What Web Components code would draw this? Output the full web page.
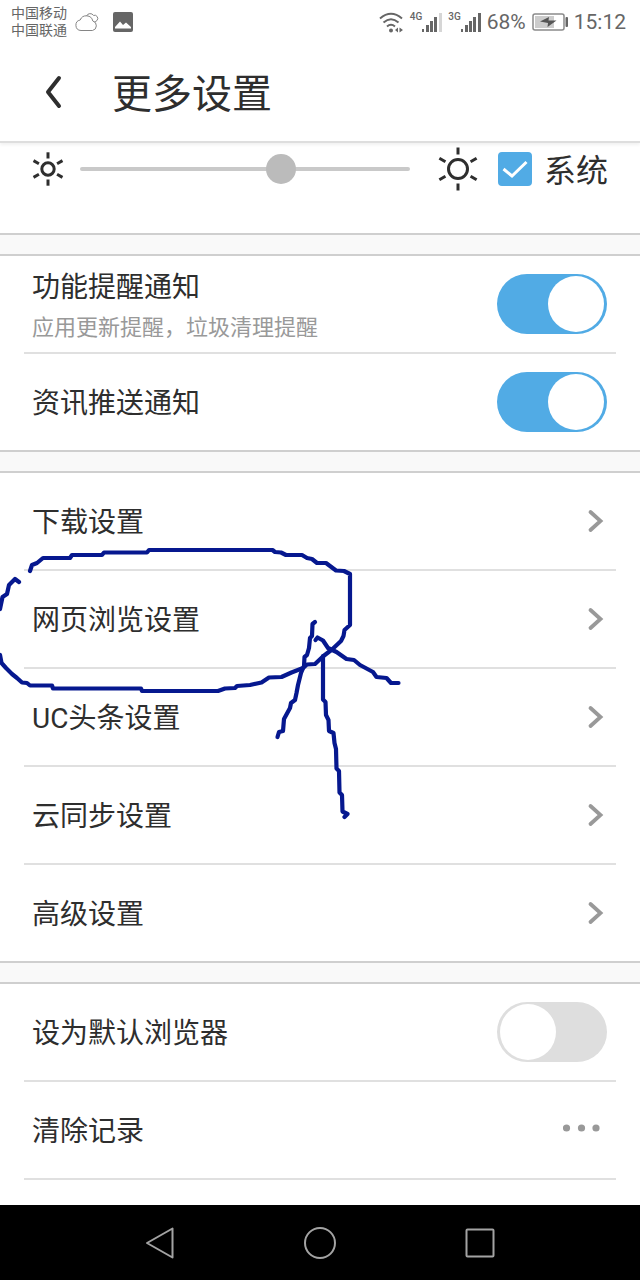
<!DOCTYPE html>
<html lang="zh-CN">
<head>
<meta charset="UTF-8">
<meta name="viewport" content="width=device-width, initial-scale=1">
<title>更多设置</title>
<style>
    html, body {
        margin: 0;
        height: 100%;
    }
    body {
        font-family: Roboto, "Noto Sans CJK SC", sans-serif;
        color: #2e2e2e;
        background: #fff;
    }
</style>
</head>
<body>
<settings-app>
    <status-bar slot="top"></status-bar>
    <page-header slot="top">更多设置</page-header>

    <brightness-panel>系统</brightness-panel>

    <settings-group>
        <switch-row checked>功能提醒通知<span slot="hint">应用更新提醒，垃圾清理提醒</span></switch-row>
        <switch-row checked>资讯推送通知</switch-row>
    </settings-group>

    <settings-group>
        <link-row href="#download">下载设置</link-row>
        <link-row href="#browsing">网页浏览设置</link-row>
        <link-row href="#headlines">UC头条设置</link-row>
        <link-row href="#sync">云同步设置</link-row>
        <link-row href="#advanced">高级设置</link-row>
        <pen-marks slot="overlay"></pen-marks>
    </settings-group>

    <settings-group open-ended>
        <switch-row>设为默认浏览器</switch-row>
        <action-row>清除记录</action-row>
    </settings-group>

    <nav-bar slot="bottom"></nav-bar>
</settings-app>

<script>
customElements.define('settings-app', class SettingsApp extends HTMLElement {
    constructor() {
        super();
        this.attachShadow({ mode: 'open' });
        this.shadowRoot.innerHTML = `
        <style>
            :host {
                display: flex;
                flex-direction: column;
                height: 100vh;
            }
            main {
                flex: 1;
                min-height: 0;
                overflow: hidden;
                display: flex;
                flex-direction: column;
                gap: 19px;
                background: #f9f9f9;
            }
        </style>
        <slot name="top"></slot>
        <main><slot></slot></main>
        <slot name="bottom"></slot>
        `;
    }
});

customElements.define('status-bar', class StatusBar extends HTMLElement {
    constructor() {
        super();
        this.attachShadow({ mode: 'open' });
        this.shadowRoot.innerHTML = `
        <style>
            :host {
                display: flex;
                justify-content: space-between;
                align-items: center;
                flex: none;
                height: 44px;
                padding: 0 14px 0 11px;
                box-sizing: border-box;
                color: #666;
            }
            .side, .signal {
                display: flex;
                align-items: center;
            }
            .side {
                gap: 6px;
            }
            .side.start {
                gap: 8px;
            }
            .carriers {
                font-size: 14px;
                line-height: 17px;
            }
            .picture {
                margin-left: 6px;
            }
            .signal {
                align-items: flex-start;
                font-size: 10px;
                line-height: 10px;
                font-weight: 500;
            }
            .value {
                font-size: 21px;
                line-height: 24px;
            }
            svg {
                display: block;
                flex: none;
            }
        </style>
        <div class="side start">
            <div class="carriers">
                <div>中国移动</div>
                <div>中国联通</div>
            </div>
            <svg width="24" height="20" viewBox="0 0 24 20" fill="none" stroke="#858585" stroke-width="1">
                <path d="M6 18.500a5.300 5.300 0 0 1-.8-10.500 6.600 6.600 0 0 1 12.600 1 4.900 4.900 0 0 1-.3 9.500z"/>
                <path d="M11.500 4a4 4 0 0 1 7-.6 3.200 3.200 0 0 1 3.400 5.200 3.500 3.500 0 0 1-2.400 1.200"/>
            </svg>
            <svg class="picture" width="20" height="20" viewBox="0 0 20 20">
                <rect width="20" height="20" rx="2" fill="#666"/>
                <path d="M2 16.500V15l5-5.500 3 3.500 3-2.500 5 4.500v1.500z" fill="#fff"/>
            </svg>
        </div>
        <div class="side">
            <svg width="25" height="21" viewBox="0 0 25 21" fill="none" stroke="#666" stroke-width="2">
                <path d="M1 6.500q11-9.500 22 0M4.500 10.500q7.500-6.500 15 0M8 14.500q4-3.500 8 0"/>
                <circle cx="12" cy="18.500" r="2" fill="#666" stroke="none"/>
                <path d="M19 15.500v5l-3-2.500zM20.500 15.500v5l3.500-2.500z" fill="#666" stroke="none"/>
            </svg>
            <div class="signal">
                <span>4G</span>
                <svg width="20" height="20" viewBox="0 0 20 20" fill="#666">
                    <rect y="17" width="2" height="3"/><rect x="4" y="13" width="3" height="7"/>
                    <rect x="8" y="9" width="3" height="11"/><rect x="12" y="5" width="3" height="15"/>
                    <rect x="17" y="1" width="3" height="19" fill="#d6d6d6"/>
                </svg>
            </div>
            <div class="signal">
                <span>3G</span>
                <svg width="20" height="20" viewBox="0 0 20 20" fill="#666">
                    <rect y="17" width="2" height="3"/><rect x="4" y="13" width="3" height="7"/>
                    <rect x="8" y="9" width="3" height="11"/><rect x="12" y="5" width="3" height="15"/>
                    <rect x="17" y="1" width="3" height="19"/>
                </svg>
            </div>
            <span class="value">68%</span>
            <svg width="36" height="18" viewBox="0 0 36 18">
                <rect x="1" y="1" width="31" height="16" rx="2" fill="#fff" stroke="#8a8a8a" stroke-width="1.500"/>
                <rect x="3" y="3" width="19" height="12" fill="#ccc"/>
                <path d="M8 8.500l9-4.500-.5 3.500h8L15.500 14l.5-4z" fill="#555"/>
                <rect x="33.500" y="4" width="2.500" height="10" rx="1" fill="#666"/>
            </svg>
            <span class="value">15:12</span>
        </div>
        `;
    }
});

customElements.define('page-header', class PageHeader extends HTMLElement {
    constructor() {
        super();
        this.attachShadow({ mode: 'open' });
        this.shadowRoot.innerHTML = `
        <style>
            :host {
                display: block;
                flex: none;
                border-bottom: 2px solid #dedede;
                box-shadow: 0 2px 3px rgba(0, 0, 0, 0.06);
                z-index: 1;
            }
            header {
                display: flex;
                align-items: center;
                gap: 24px;
                height: 97px;
                padding: 0 32px 0 20px;
            }
            button {
                display: flex;
                justify-content: center;
                align-items: center;
                width: 68px;
                height: 68px;
                padding: 0;
                border: 0;
                background: none;
                color: inherit;
            }
            h1 {
                margin: 0;
                padding-top: 4px;
                font-size: 40px;
                line-height: 56px;
                font-weight: 400;
            }
        </style>
        <header>
            <button aria-label="返回">
                <svg width="20" height="36" viewBox="0 0 20 36" fill="none" stroke="currentColor" stroke-width="4" stroke-linecap="round" stroke-linejoin="round">
                    <path d="M15 3L4 17l11 14"/>
                </svg>
            </button>
            <h1><slot></slot></h1>
        </header>
        `;
    }
});

customElements.define('sun-icon', class SunIcon extends HTMLElement {
    constructor() {
        super();
        this.attachShadow({ mode: 'open' });
        const large = this.hasAttribute('large');
        const size = large ? 42 : 34;
        const radius = large ? 9.5 : 6.2;
        const inner = large ? 14.5 : 10.5;
        const outer = large ? 21.5 : 16.7;
        const rays = [0, 60, 120, 180, 240, 300].map(angle =>
            `<path d="M0-${inner}V-${outer}" transform="rotate(${angle})"/>`
        ).join('');
        this.shadowRoot.innerHTML = `
        <style>
            :host {
                display: block;
                flex: none;
            }
            svg {
                display: block;
                overflow: visible;
            }
        </style>
        <svg width="${size - 2}" height="${size}" viewBox="${1 - size / 2} ${-size / 2} ${size - 2} ${size}" fill="none" stroke="currentColor" stroke-width="3">
            <circle r="${radius}"/>
            ${rays}
        </svg>
        `;
    }
});

customElements.define('brightness-panel', class BrightnessPanel extends HTMLElement {
    constructor() {
        super();
        this.attachShadow({ mode: 'open' });
        this.shadowRoot.innerHTML = `
        <style>
            :host {
                display: flex;
                align-items: center;
                flex: none;
                height: 52px;
                padding: 0 32px 38px;
                background: #fff;
                border-bottom: 2px solid #cfcfcf;
            }
            .range {
                appearance: none;
                flex: 1;
                min-width: 0;
                height: 30px;
                margin: 0 28px 0 16px;
                background: none;
            }
            .range::-webkit-slider-runnable-track {
                height: 4px;
                border-radius: 2px;
                background: #c9c9c9;
            }
            .range::-webkit-slider-thumb {
                appearance: none;
                width: 30px;
                height: 30px;
                margin-top: -13px;
                border-radius: 50%;
                background: #bbb;
            }
            label {
                display: flex;
                align-items: center;
                gap: 12px;
                margin-left: 20px;
                font-size: 32px;
                line-height: 48px;
            }
            .text {
                padding-top: 3px;
            }
            .box {
                display: grid;
                width: 34px;
                height: 34px;
            }
            .box > * {
                grid-area: 1 / 1;
            }
            .box input {
                appearance: none;
                width: 34px;
                height: 34px;
                margin: 0;
                border: 2px solid #c9c9c9;
                border-radius: 4px;
            }
            .box input:checked {
                border-color: #51abe5;
                background: #51abe5;
            }
            .box svg {
                pointer-events: none;
            }
        </style>
        <sun-icon></sun-icon>
        <input class="range" type="range" min="0" max="100" value="62" aria-label="亮度">
        <sun-icon large></sun-icon>
        <label>
            <span class="box">
                <input type="checkbox" checked>
                <svg width="34" height="34" viewBox="0 0 34 34" fill="none" stroke="#fff" stroke-width="3">
                    <path d="M5.500 17l8.500 7L28.500 10"/>
                </svg>
            </span>
            <span class="text"><slot></slot></span>
        </label>
        `;
    }
});

customElements.define('settings-group', class SettingsGroup extends HTMLElement {
    constructor() {
        super();
        this.attachShadow({ mode: 'open' });
        this.shadowRoot.innerHTML = `
        <style>
            :host {
                display: block;
                flex: none;
                position: relative;
                padding: 0 24px;
                background: #fff;
                border: solid #cfcfcf;
                border-width: 2px 0;
            }
            :host([open-ended]) {
                flex: 1;
                border-bottom: 0;
            }
            ::slotted(:not([slot])) {
                border-bottom: 2px solid #e0e0e0;
            }
            :host(:not([open-ended])) ::slotted(:nth-last-child(1 of :not([slot]))) {
                border-bottom: 0;
            }
        </style>
        <slot></slot>
        <slot name="overlay"></slot>
        `;
    }
});

// shared by all three kinds of row
const rowStyle = `
    :host {
        display: block;
    }
    .row {
        display: flex;
        justify-content: space-between;
        align-items: center;
        width: 100%;
        height: 96px;
        padding: 0 9px 0 8px;
        box-sizing: border-box;
        border: 0;
        background: none;
        color: inherit;
        font: inherit;
        font-size: 28px;
        line-height: 40px;
        text-align: left;
        text-decoration: none;
    }
    .text {
        display: flex;
        flex-direction: column;
        padding-top: 4px;
    }
    svg {
        display: block;
        flex: none;
    }
`;

customElements.define('switch-row', class SwitchRow extends HTMLElement {
    constructor() {
        super();
        this.attachShadow({ mode: 'open' });
        this.shadowRoot.innerHTML = `
        <style>
            ${rowStyle}
            .text.two-lines {
                padding-top: 8px;
            }
            ::slotted([slot="hint"]) {
                color: #999;
                font-size: 22px;
                line-height: 40px;
            }
            input {
                appearance: none;
                display: flex;
                flex: none;
                width: 110px;
                height: 60px;
                margin: 0;
                padding: 2px 3px;
                box-sizing: border-box;
                border-radius: 30px;
                background: #dedede;
            }
            input::before {
                content: "";
                width: 56px;
                height: 56px;
                border-radius: 50%;
                background: #fff;
            }
            input:checked {
                justify-content: flex-end;
                background: #51abe5;
            }
        </style>
        <label class="row">
            <span class="text">
                <span><slot></slot></span>
                <slot name="hint"></slot>
            </span>
            <input type="checkbox" role="switch">
        </label>
        `;
        this.shadowRoot.querySelector('input').checked = this.hasAttribute('checked');
        if (this.querySelector('[slot="hint"]')) {
            this.shadowRoot.querySelector('.text').classList.add('two-lines');
        }
    }
});

customElements.define('link-row', class LinkRow extends HTMLElement {
    constructor() {
        super();
        this.attachShadow({ mode: 'open' });
        this.shadowRoot.innerHTML = `
        <style>${rowStyle}</style>
        <a class="row" href="${this.getAttribute('href')}">
            <span class="text"><slot></slot></span>
            <svg width="24" height="24" viewBox="0 0 24 24" fill="none" stroke="#999" stroke-width="3.800" stroke-linecap="round">
                <path d="M7.500 3L17.500 12l-10 9"/>
            </svg>
        </a>
        `;
    }
});

customElements.define('action-row', class ActionRow extends HTMLElement {
    constructor() {
        super();
        this.attachShadow({ mode: 'open' });
        this.shadowRoot.innerHTML = `
        <style>${rowStyle}</style>
        <button class="row">
            <span class="text"><slot></slot></span>
            <svg width="44" height="12" viewBox="0 0 44 12" fill="#999">
                <circle cx="3.500" cy="4" r="3.600"/>
                <circle cx="18.500" cy="4" r="3.600"/>
                <circle cx="33" cy="4" r="3.600"/>
            </svg>
        </button>
        `;
    }
});

// hand-drawn circle and arrow lying over the rows
customElements.define('pen-marks', class PenMarks extends HTMLElement {
    constructor() {
        super();
        this.attachShadow({ mode: 'open' });
        this.shadowRoot.innerHTML = `
        <style>
            :host {
                position: absolute;
                left: 0;
                top: 67px;
                pointer-events: none;
            }
            svg {
                display: block;
            }
        </style>
        <svg width="420" height="290" viewBox="0 540 420 290" fill="none" stroke="#06188f" stroke-width="4.200" stroke-linecap="round" stroke-linejoin="round" aria-hidden="true">
            <path d="M30 571L32 565 37 563 43 558H70L72 555H102L104 552.500H147L149 550H272.500L275 552 281 552.500 286 555H302L307 558 312 559 317 563H326L336 570.500 344 571 350 574V625L344.500 630 343.500 636 341 641 332 649.500 323.500 656 315 664 307 664.500 303 668 291.500 672.500 281.500 677 269 677.500 261.500 682.500 250 685 237 686 235 688 225 688.500 218 691H142L141 688.500H53L52 685.500H30L27 683 22 682.500 17 678 12 674 6 668 1.500 663 0 655"/>
            <path d="M0 609L2.500 597 7 594 9 585 15 579 19 582"/>
            <path d="M315 622L312.500 624 312 636 310 638 309 648 307 655 304.500 657 304 666 301 673 298 685 296.500 693 295 700 291 703 290 708 284 719 283 731 279 732 277.500 737"/>
            <path d="M315.500 640L317.500 637.500 323 640.500 328 648 336.500 652 346.500 659 354 660 360 665 373 672 376.500 677 386.500 678 391 683H398.500"/>
            <path d="M323 656V699.500L325.500 702 326 715 328.500 720 329 731 333.500 733 334.500 743 336 749 336.500 768.500 339 771 339.500 792.500 342 795 342.500 811.500 347.500 814 344.500 817"/>
        </svg>
        `;
    }
});

customElements.define('nav-bar', class NavBar extends HTMLElement {
    constructor() {
        super();
        this.attachShadow({ mode: 'open' });
        this.shadowRoot.innerHTML = `
        <style>
            :host {
                display: block;
                flex: none;
                background: #000;
            }
            nav {
                display: grid;
                grid-template-columns: repeat(3, 1fr);
                width: 75%;
                height: 75px;
                margin: 0 auto;
            }
            button {
                display: flex;
                justify-content: center;
                align-items: center;
                padding: 0;
                border: 0;
                background: none;
            }
        </style>
        <nav>
            <button aria-label="返回">
                <svg width="34" height="34" viewBox="0 0 34 34" fill="none" stroke="#a3a3a3" stroke-width="2" stroke-linejoin="round">
                    <path d="M29.500 2.500v29L4 17z"/>
                </svg>
            </button>
            <button aria-label="主屏幕">
                <svg width="34" height="34" viewBox="0 0 34 34" fill="none" stroke="#a3a3a3" stroke-width="2">
                    <circle cx="17" cy="17" r="15"/>
                </svg>
            </button>
            <button aria-label="最近任务">
                <svg width="34" height="34" viewBox="0 0 34 34" fill="none" stroke="#a3a3a3" stroke-width="2">
                    <rect x="3.500" y="3.500" width="27" height="27" rx="1"/>
                </svg>
            </button>
        </nav>
        `;
    }
});
</script>
</body>
</html>
